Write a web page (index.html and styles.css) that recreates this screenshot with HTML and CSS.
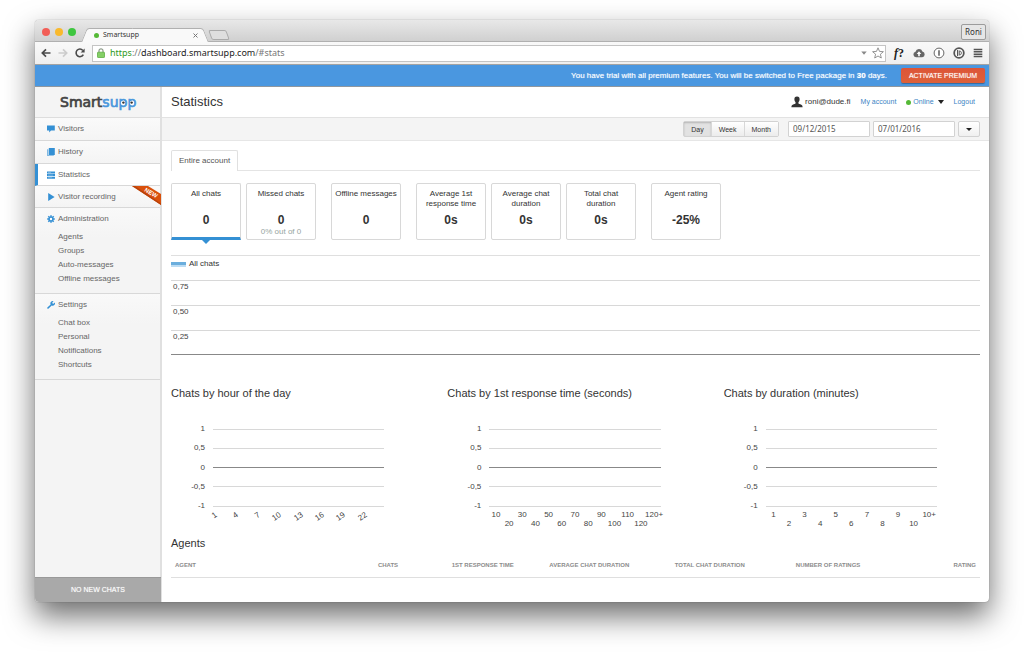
FILE: index.html
```html
<!DOCTYPE html>
<html lang="en">
<head>
<meta charset="utf-8">
<title>Smartsupp</title>
<link rel="stylesheet" href="styles.css">
</head>
<body>
<div class="window">
  <div class="tabstrip">
    <div class="lights"><span class="light red"></span><span class="light yellow"></span><span class="light green"></span></div>
    <div class="tab"><span class="dot"></span><span class="tab-title">Smartsupp</span>
      <button class="tab-close" aria-label="Close tab"><svg width="5" height="5" viewBox="0 0 5 5"><path d="M.5.5l4 4M4.5.5l-4 4" stroke="#777" stroke-width="1"/></svg></button>
    </div>
    <button class="newtab" aria-label="New tab"></button>
    <button class="profile">Roni</button>
  </div>

  <div class="toolbar">
    <button class="tool" aria-label="Back"><svg width="10" height="10" viewBox="0 0 10 10"><path d="M9.5 5H1.5M5 1.3L1.3 5 5 8.7" fill="none" stroke="#4a4a4a" stroke-width="1.7"/></svg></button>
    <button class="tool" aria-label="Forward"><svg width="10" height="10" viewBox="0 0 10 10"><path d="M.5 5h8M5 1.3L8.7 5 5 8.7" fill="none" stroke="#ccc" stroke-width="1.7"/></svg></button>
    <button class="tool" aria-label="Reload"><svg width="10" height="10" viewBox="0 0 10 10"><path d="M8.3 6.6A3.8 3.8 0 1 1 7.8 2.4" fill="none" stroke="#4a4a4a" stroke-width="1.6"/><path d="M9.6.4v4H5.6z" fill="#4a4a4a"/></svg></button>
    <div class="address">
      <svg width="8" height="10" viewBox="0 0 8 10"><path d="M2 5V2.8a2 2 0 0 1 4 0V5" fill="none" stroke="#8f9c8b" stroke-width="1.2"/><rect x=".5" y="4.2" width="7" height="5.3" rx=".6" fill="#84cf66" stroke="#5fae45" stroke-width=".8"/></svg>
      <span class="url"><span class="scheme">https</span>://<span class="host">dashboard.smartsupp.com</span>/#stats</span>
      <svg width="6" height="4" viewBox="0 0 6 4"><path d="M.3.5h5.4L3 3.7z" fill="#888"/></svg>
      <svg width="12" height="12" viewBox="0 0 12 12"><path d="M6 .8l1.5 3.6 3.9.3-3 2.5.9 3.8L6 9l-3.3 2 .9-3.8-3-2.5 3.9-.3z" fill="#fff" stroke="#888" stroke-width=".9"/></svg>
    </div>
    <div class="extensions">
      <button class="tool fq" aria-label="WhatFont"><i>f</i>?</button>
      <button class="tool" aria-label="Cloud"><svg width="12" height="10" viewBox="0 0 12 10"><path d="M3 9.2a2.8 2.8 0 0 1-.5-5.5 3.6 3.6 0 0 1 6.9-.2A2.9 2.9 0 0 1 9.2 9.2z" fill="#666"/><path d="M6 3.2L3.7 6h1.5v2.2h1.6V6h1.5z" fill="#fff"/></svg></button>
      <button class="tool" aria-label="Password manager"><svg width="12" height="12" viewBox="0 0 12 12"><circle cx="6" cy="6" r="4.9" fill="#fff" stroke="#666"/><path d="M6 3.2v5.6" stroke="#666" stroke-width="1.6"/></svg></button>
      <button class="tool" aria-label="Disconnect"><svg width="12" height="12" viewBox="0 0 12 12"><circle cx="6" cy="6" r="4.8" fill="#fff" stroke="#555" stroke-width="1.8"/><path d="M4.600 3v6" stroke="#555" stroke-width="1.300"/><path d="M6.300 3.900a2.100 2.100 0 0 1 0 4.200z" fill="none" stroke="#555" stroke-width=".9"/></svg></button>
      <button class="tool" aria-label="Menu"><svg width="10" height="10" viewBox="0 0 10 10"><path d="M.7 1.4h8.6M.7 3.8h8.6M.7 6.2h8.6M.7 8.6h8.6" stroke="#555" stroke-width="1.5"/></svg></button>
    </div>
  </div>

  <div class="banner">
    <span>You have trial with all premium features. You will be switched to Free package in <b>30</b> days.</span>
    <button class="activate">ACTIVATE PREMIUM</button>
  </div>

  <div class="app">
    <aside class="sidebar">
      <a class="logo" href="#home" aria-label="Smartsupp">
        <svg width="78" height="18" viewBox="0 0 78 18">
          <text class="logo-text" x="1" y="14"><tspan class="logo-dark">Smart</tspan><tspan class="logo-blue">supp</tspan></text>
          <circle cx="64" cy="10" r="2.2" fill="#fff"/><circle cx="64.4" cy="9.6" r="1.2" fill="#333"/>
          <circle cx="73" cy="10" r="2.2" fill="#fff"/><circle cx="72.6" cy="9.6" r="1.2" fill="#333"/>
        </svg>
      </a>
      <nav>
        <a class="item" href="#visitors"><svg class="ico" viewBox="0 0 8 8"><path d="M0 .6h7.8v5H4L2.2 7.6V5.6H0z"/></svg>Visitors</a>
        <a class="item" href="#history"><svg class="ico" viewBox="0 0 8 8"><path d="M1.8 0h6v7h-6z"/><path d="M.4 1.2h.8v6.2h5.6V8H.4z"/></svg>History</a>
        <a class="item active" href="#stats"><svg class="ico" viewBox="0 0 8 8"><path d="M0 .4h8v2H0zM0 3.1h8v2H0zM0 5.8h8v2H0z"/><path d="M1 1.4h3M1 4.1h5M1 6.8h4" stroke="#9cc9ea" stroke-width=".6"/></svg>Statistics</a>
        <a class="item" href="#recording"><svg class="ico" viewBox="0 0 8 8"><path d="M1.200 0L7.600 4 1.200 8z"/></svg>Visitor recording
          <svg class="ribbon" width="29" height="19" viewBox="0 0 29 19"><path d="M0 0h16l13 8v11z" fill="#d9500b"/><path d="M0 0l29 19v-1.500L3 0z" fill="#b8420a"/><text class="ribbon-text" x="12" y="5" transform="rotate(31 12 5)">NEW</text></svg></a>
        <div class="group">
          <a class="item-head" href="#admin"><svg class="ico" viewBox="0 0 8 8"><path d="M4 .2v7.6M.2 4h7.6M1.3 1.3l5.4 5.4M6.7 1.3L1.3 6.7" stroke="#3490d4" stroke-width="1.5"/><circle cx="4" cy="4" r="2.6"/><circle cx="4" cy="4" r="1.2" fill="#fff"/></svg>Administration</a>
          <a class="sub" href="#agents">Agents</a><a class="sub" href="#groups">Groups</a><a class="sub" href="#auto">Auto-messages</a><a class="sub" href="#offline">Offline messages</a>
        </div>
        <div class="group">
          <a class="item-head" href="#settings"><svg class="ico" viewBox="0 0 8 8"><path d="M.4 6.4L3.6 3.4A2.3 2.3 0 0 1 6.6.3L5.3 1.6l.2 1 1 .2L7.8 1.5A2.3 2.3 0 0 1 4.7 4.5L1.6 7.6A.85.85 0 0 1 .4 6.4z"/></svg>Settings</a>
          <a class="sub" href="#chatbox">Chat box</a><a class="sub" href="#personal">Personal</a><a class="sub" href="#notifications">Notifications</a><a class="sub" href="#shortcuts">Shortcuts</a>
        </div>
      </nav>
      <button class="newchats">NO NEW CHATS</button>
    </aside>

    <main class="main">
      <header class="header">
        <h1>Statistics</h1>
        <div class="account">
          <span class="user"><svg width="12" height="12" viewBox="0 0 12 12"><path d="M6 .6c2 0 2.7 1.300 2.600 3-.1 1.500-.7 2.200-1.200 2.800-.2 1.100.5 1.400 1.900 1.900 1.600.5 2.200 1 2.300 2.900H.4c.1-1.900.7-2.400 2.300-2.900 1.400-.5 2.100-.8 1.900-1.900-.5-.6-1.100-1.300-1.200-2.800C3.300 1.900 4 .6 6 .6z" fill="#333"/></svg>roni@dude.fi</span>
          <a href="#account">My account</a>
          <button class="status"><span class="dot"></span>Online<svg width="6" height="4" viewBox="0 0 6 4"><path d="M0 0h6L3 4z" fill="#222"/></svg></button>
          <a href="#logout">Logout</a>
        </div>
      </header>

      <div class="filters">
        <div class="segment"><button class="seg on">Day</button><button class="seg">Week</button><button class="seg">Month</button></div>
        <div class="dates">
          <input class="date" type="text" aria-label="From" value="09/12/2015">
          <input class="date" type="text" aria-label="To" value="07/01/2016">
          <button class="drop" aria-label="Date presets"><svg width="6" height="3" viewBox="0 0 6 3"><path d="M0 0h6L3 3z" fill="#222"/></svg></button>
        </div>
      </div>

      <div class="content">
        <div class="tabs"><button class="scope">Entire account</button></div>

        <div class="cards">
          <div class="cardset">
            <button class="card selected"><span class="label">All chats</span><b class="value">0</b></button>
            <button class="card"><span class="label">Missed chats</span><b class="value">0</b><span class="note">0% out of 0</span></button>
          </div>
          <div class="cardset">
            <button class="card"><span class="label">Offline messages</span><b class="value">0</b></button>
          </div>
          <div class="cardset">
            <button class="card"><span class="label">Average 1st response time</span><b class="value">0s</b></button>
            <button class="card"><span class="label">Average chat duration</span><b class="value">0s</b></button>
            <button class="card"><span class="label">Total chat duration</span><b class="value">0s</b></button>
          </div>
          <div class="cardset">
            <button class="card"><span class="label">Agent rating</span><b class="value">-25%</b></button>
          </div>
        </div>

        <section class="trend">
          <div class="legend"><span class="swatch"></span>All chats</div>
          <div class="level">0,75</div><div class="level">0,50</div><div class="level">0,25</div>
        </section>

        <div class="charts">
          <section class="chart">
            <h2>Chats by hour of the day</h2>
            <div class="plot"><div class="line"><span>1</span></div><div class="line"><span>0,5</span></div><div class="line zero"><span>0</span></div><div class="line"><span>-0,5</span></div><div class="line"><span>-1</span></div></div>
            <div class="axis tilted"><span>1</span><span>4</span><span>7</span><span>10</span><span>13</span><span>16</span><span>19</span><span>22</span></div>
          </section>
          <section class="chart">
            <h2>Chats by 1st response time (seconds)</h2>
            <div class="plot"><div class="line"><span>1</span></div><div class="line"><span>0,5</span></div><div class="line zero"><span>0</span></div><div class="line"><span>-0,5</span></div><div class="line"><span>-1</span></div></div>
            <div class="axis staggered"><span>10</span><span>20</span><span>30</span><span>40</span><span>50</span><span>60</span><span>70</span><span>80</span><span>90</span><span>100</span><span>110</span><span>120</span><span>120+</span></div>
          </section>
          <section class="chart">
            <h2>Chats by duration (minutes)</h2>
            <div class="plot"><div class="line"><span>1</span></div><div class="line"><span>0,5</span></div><div class="line zero"><span>0</span></div><div class="line"><span>-0,5</span></div><div class="line"><span>-1</span></div></div>
            <div class="axis staggered"><span>1</span><span>2</span><span>3</span><span>4</span><span>5</span><span>6</span><span>7</span><span>8</span><span>9</span><span>10</span><span>10+</span></div>
          </section>
        </div>

        <section class="agents">
          <h2>Agents</h2>
          <table>
            <thead><tr><th>AGENT</th><th>CHATS</th><th>1ST RESPONSE TIME</th><th>AVERAGE CHAT DURATION</th><th>TOTAL CHAT DURATION</th><th>NUMBER OF RATINGS</th><th>RATING</th></tr></thead>
          </table>
        </section>
      </div>
    </main>
  </div>
</div>
</body>
</html>
```

FILE: styles.css
```css
* { box-sizing: border-box; }

body {
  margin: 0;
  min-height: 100vh;
  padding: 20px 35px 50px;
  display: flex;
  background: #fff;
  color: #333;
  font: 8px/10px "Liberation Sans", Arial, sans-serif;
}

button, input {
  margin: 0;
  padding: 0;
  border: 0;
  background: none;
  color: inherit;
  font: inherit;
}

a { color: #3a84c4; text-decoration: none; }
h1, h2 { margin: 0; font-weight: 400; }
svg { display: block; flex: none; }

.window {
  flex: 1;
  min-width: 0;
  display: flex;
  flex-direction: column;
  border-radius: 4px;
  background: #fff;
  box-shadow: 0 0 1px rgba(0, 0, 0, .5), 0 14px 30px rgba(0, 0, 0, .58);
}

/* Browser chrome */
.tabstrip {
  height: 22px;
  display: flex;
  align-items: flex-end;
  padding: 0 3px 0 7px;
  border-radius: 4px 4px 0 0;
  border-bottom: 1px solid #b0b0b0;
  background: linear-gradient(#e8e8e8, #d0d0d0);
}
.lights { display: flex; gap: 5px; padding-bottom: 5px; }
.light { width: 8px; height: 8px; border-radius: 50%; }
.red { background: #f25e57; }
.yellow { background: #f9b92c; }
.green { background: #3ec63f; }

.tab {
  position: relative;
  z-index: 0;
  width: 120px;
  height: 14px;
  margin: 0 0 -1px 9px;
  padding: 0 7px 0 9px;
  display: flex;
  align-items: center;
  gap: 4px;
}
.tab::before, .tab::after {
  content: "";
  position: absolute;
  z-index: -1;
  top: 0;
  bottom: 0;
  width: 70px;
  background: #f9f9f9;
  border-top: 1px solid #b0b0b0;
}
.tab::before {
  left: -1px;
  border-left: 1px solid #b0b0b0;
  border-top-left-radius: 3px;
  transform: skewX(-22deg);
}
.tab::after {
  right: -1px;
  border-right: 1px solid #b0b0b0;
  border-top-right-radius: 3px;
  transform: skewX(22deg);
}
.dot { width: 5px; height: 5px; border-radius: 50%; background: #55b936; }
.tab-title { flex: 1; font: 7px/10px "Noto Sans", sans-serif; }
.newtab {
  width: 18px;
  height: 10px;
  margin: 0 0 1px 5px;
  border: 1px solid #aaa;
  border-radius: 2px;
  background: #dedede;
  transform: skewX(20deg);
}
.profile {
  width: 25px;
  height: 16px;
  margin: 0 0 1px auto;
  border: 1px solid #9c9c9c;
  border-radius: 2px;
  background: #e6e6e6;
  font: 8px/10px "Noto Sans", sans-serif;
}

.toolbar {
  height: 23px;
  padding: 0 6px;
  display: flex;
  align-items: center;
  gap: 7px;
  border-bottom: 1px solid #a3a3a3;
  background: linear-gradient(#f9f9f9, #efefef);
}
.tool { flex: none; }
.address {
  flex: 1;
  height: 17px;
  padding: 0 1px 0 4px;
  display: flex;
  align-items: center;
  gap: 5px;
  border: 1px solid #c4c4c4;
  background: #fff;
}
.url { flex: 1; color: #777; font: 9px/12px "Noto Sans", sans-serif; }
.scheme { color: #2f9a1c; }
.host { color: #222; }
.extensions { display: flex; align-items: center; gap: 8px; }
.fq { width: 12px; color: #222; font: bold 12px/12px "Liberation Serif", serif; }

.banner {
  height: 22px;
  padding: 0 4px;
  display: flex;
  align-items: center;
  justify-content: flex-end;
  gap: 14px;
  border-bottom: 1px solid #8f979f;
  background: #4a97e0;
  color: #fff;
  text-shadow: 0 0 1px rgba(255, 255, 255, .6);
}
.activate {
  width: 84px;
  height: 15px;
  border-radius: 2px;
  background: linear-gradient(#dc5538, #de6038);
  box-shadow: 0 1px 1px rgba(0, 0, 0, .3);
  font-size: 7px;
  text-shadow: inherit;
}

/* Application */
.app { flex: 1; display: flex; }

.sidebar {
  flex: none;
  width: 127px;
  display: flex;
  flex-direction: column;
  border-right: 2px solid #e0e0e0;
  border-bottom-left-radius: 4px;
  background: #f4f4f4;
}
.logo {
  height: 31px;
  display: flex;
  align-items: center;
  justify-content: center;
  border-bottom: 1px solid #ddd;
}
.logo-text { font: 14px "DejaVu Sans", sans-serif; }
.logo-dark { fill: #444; stroke: #444; stroke-width: .7px; }
.logo-blue { fill: #4a97dc; stroke: #4a97dc; stroke-width: .7px; }

.item, .item-head {
  display: flex;
  align-items: center;
  gap: 3px;
  padding-left: 12px;
  color: #666;
}
.item {
  position: relative;
  height: 23px;
  border-bottom: 1px solid #d8d8d8;
  background: linear-gradient(#fafafa, #f4f4f4);
}
.item.active {
  padding-left: 9px;
  border-left: 3px solid #3490d4;
  background: #fff;
}
.item.active, .item.active + .item { height: 22px; }
.ico { width: 8px; height: 8px; fill: #3490d4; }
.ribbon { position: absolute; top: 0; right: -1px; }
.ribbon-text { fill: #fff; font: bold 6px "Liberation Sans", Arial, sans-serif; }

.group {
  padding-bottom: 7px;
  border-bottom: 1px solid #d8d8d8;
  background: linear-gradient(#f9f9f9, #f4f4f4 30px);
}
.item-head { height: 21px; }
.sub {
  display: block;
  padding-left: 23px;
  color: #666;
  line-height: 14px;
}
.sub:nth-child(2) { margin-top: 1px; }

.newchats {
  height: 25px;
  margin-top: auto;
  margin-right: -1px;
  border-top: 1px solid #999;
  border-bottom-left-radius: 4px;
  background: #a9a9a9;
  color: #fff;
  font-size: 7px;
  text-shadow: 0 0 1px rgba(255, 255, 255, .6);
}

.main { flex: 1; min-width: 0; }
.header {
  height: 31px;
  padding: 0 14px 0 9px;
  display: flex;
  align-items: center;
  justify-content: space-between;
  border-bottom: 1px solid #e2e2e2;
}
h1 { font-size: 13px; line-height: 16px; }
.account { display: flex; align-items: center; gap: 10px; font-size: 7px; }
.user { display: flex; align-items: center; gap: 2px; font-size: 8px; }
.status { display: flex; align-items: center; gap: 2px; color: #3a84c4; }
.status svg { margin-left: 2px; }

.filters {
  height: 23px;
  padding: 0 9px;
  display: flex;
  align-items: center;
  justify-content: flex-end;
  gap: 9px;
  border-bottom: 1px solid #e6e6e6;
  background: #f4f4f4;
}
.segment {
  display: flex;
  height: 16px;
  border: 1px solid #d2d2d2;
  border-radius: 2px;
  font-size: 7px;
}
.seg {
  padding: 1px 7px 0;
  border-left: 1px solid #d8d8d8;
  background: linear-gradient(#fff, #ececec);
}
.seg.on {
  border-left: 0;
  background: #e2e2e2;
  box-shadow: inset 0 1px 2px rgba(0, 0, 0, .2);
}
.dates { display: flex; gap: 3px; }
.date {
  width: 82px;
  height: 16px;
  padding: 0 4px 2px;
  border: 1px solid #d2d2d2;
  border-radius: 1px;
  background: #fff;
  color: #555;
  font: 8px/12px "Noto Sans", sans-serif;
}
.drop {
  width: 22px;
  height: 16px;
  display: flex;
  align-items: center;
  justify-content: center;
  border: 1px solid #d2d2d2;
  border-radius: 2px;
  background: linear-gradient(#fff, #f0f0f0);
}

.content { padding: 9px; }
.tabs { display: flex; border-bottom: 1px solid #e4e4e4; }
.scope {
  height: 21px;
  margin-bottom: -1px;
  padding: 0 7px;
  border: 1px solid #e0e0e0;
  border-bottom: 0;
  border-radius: 2px 2px 0 0;
  background: #fff;
  color: #555;
}

.cards { display: flex; gap: 15px; margin: 12px 0 15px; }
.cardset { display: flex; gap: 5px; }
.card {
  position: relative;
  width: 70px;
  height: 57px;
  padding: 5px 2px 2px;
  display: flex;
  flex-direction: column;
  align-items: center;
  border: 1px solid #d8d8d8;
  border-radius: 2px;
  background: #fff;
}
.label { width: 64px; min-height: 24px; text-align: center; }
.value { font-size: 12px; line-height: 14px; }
.note { color: #95a5a0; }
.card.selected { border-bottom: 3px solid #3490d4; border-radius: 2px 2px 0 0; }
.card.selected::after {
  content: "";
  position: absolute;
  top: 100%;
  left: 50%;
  margin: 2px 0 0 -5px;
  border: 5px solid transparent;
  border-top-color: #3490d4;
  border-bottom: 0;
}

.trend { border-top: 1px solid #dfdfdf; }
.legend { height: 24px; padding-bottom: 8px; display: flex; align-items: center; gap: 3px; }
.swatch {
  width: 15px;
  height: 5px;
  border-top: 3px solid #6baedd;
  background: #bcdcf3;
}
.level { height: 25px; padding: 1px 2px; border-top: 1px solid #d8d8d8; color: #444; }
.level:last-child { border-bottom: 1px solid #888; }

.charts {
  display: grid;
  grid-template-columns: repeat(3, 1fr);
  gap: 20px;
  margin-top: 30px;
}
h2 { font-size: 11px; line-height: 16px; }
.plot {
  height: 85px;
  margin-top: 24px;
  padding-right: 43px;
  display: flex;
  flex-direction: column;
  justify-content: space-between;
  line-height: 8px;
}
.line { display: flex; align-items: center; gap: 8px; color: #444; }
.line span { width: 34px; text-align: right; }
.line::after { content: ""; flex: 1; height: 1px; background: #d8d8d8; }
.line.zero::after { background: #888; }
.axis {
  height: 18px;
  margin: 0 43px 0 42px;
  display: grid;
  grid-auto-flow: column;
  grid-auto-columns: minmax(0, 1fr);
  line-height: 9px;
  color: #444;
}
.axis span { display: flex; justify-content: center; }
.staggered span:nth-child(even) { padding-top: 9px; }
.tilted span {
  width: 9px;
  height: 9px;
  margin-top: 2px;
  justify-content: flex-end;
  transform: rotate(-35deg);
}
.tilted { margin-left: 37px; margin-right: 48px; }

.agents { margin-top: 7px; }
table { width: 100%; margin-top: 2px; table-layout: fixed; border-collapse: collapse; }
th {
  height: 24px;
  padding: 0 4px;
  border-bottom: 1px solid #dfdfdf;
  color: #8c8c8c;
  font-size: 6px;
  text-align: right;
  white-space: nowrap;
}
th:first-child { text-align: left; }
```
